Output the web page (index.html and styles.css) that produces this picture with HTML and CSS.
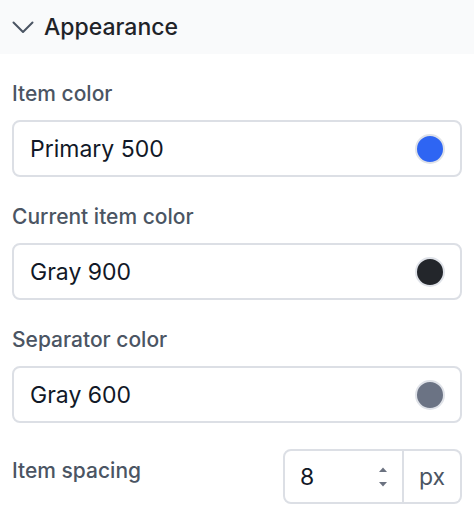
FILE: index.html
```html
<!DOCTYPE html>
<html lang="en">
<head>
  <meta charset="UTF-8">
  <meta name="viewport" content="width=device-width, initial-scale=1.0">
  <title>Appearance</title>
  <link rel="stylesheet" href="styles.css">
</head>
<body>
  <div class="panel">
    <div class="panel-header">
      <svg class="chevron" width="22" height="13" viewBox="0 0 22 13">
        <path d="M1.5 1.5 L11 11 L20.5 1.5" fill="none" stroke="#4b5563" stroke-width="2" stroke-linecap="round" stroke-linejoin="round"/>
      </svg>
      <span class="panel-title">Appearance</span>
    </div>

    <div class="panel-body">
      <div class="field">
        <div class="field-label">Item color</div>
        <div class="color-input">
          <span class="color-value">Primary 500</span>
          <span class="swatch swatch-primary"></span>
        </div>
      </div>

      <div class="field">
        <div class="field-label">Current item color</div>
        <div class="color-input">
          <span class="color-value">Gray 900</span>
          <span class="swatch swatch-gray900"></span>
        </div>
      </div>

      <div class="field">
        <div class="field-label">Separator color</div>
        <div class="color-input">
          <span class="color-value">Gray 600</span>
          <span class="swatch swatch-gray600"></span>
        </div>
      </div>

      <div class="field field-row">
        <div class="field-label">Item spacing</div>
        <div class="unit-input">
          <div class="number-box">
            <span class="number-value">8</span>
            <span class="spinner">
              <svg width="10" height="24" viewBox="0 0 10 24">
                <path d="M1 7 L5 2.5 L9 7 Z" fill="#6b7280"/>
                <path d="M1 17 L5 21.5 L9 17 Z" fill="#6b7280"/>
              </svg>
            </span>
          </div>
          <div class="unit-box">px</div>
        </div>
      </div>
    </div>
  </div>
</body>
</html>
```

FILE: styles.css
```css
body {
  margin: 0;
  background-color: #fff;
  font-family: Inter, "Noto Sans", sans-serif;
}

.panel-header {
  height: 54px;
  background-color: #f9fafb;
  padding: 0 12px 0 12px;
  display: flex;
  align-items: center;
  gap: 10px;
}
.chevron {
  display: block;
  margin-top: 1px;
}
.panel-title {
  font-size: 23px;
  font-weight: 500;
  color: #1f2328;
}

.panel-body {
  padding: 26px 12px 0 12px;
}

.field {
  margin-bottom: 26px;
}
.field-label {
  font-size: 21px;
  line-height: 28px;
  font-weight: 500;
  color: #4b5563;
  margin-bottom: 12px;
}

.color-input {
  box-sizing: border-box;
  height: 57px;
  border: 2px solid #dcdfe5;
  border-radius: 8px;
  display: flex;
  align-items: center;
  justify-content: space-between;
  padding: 0 15px 0 16px;
}
.color-value {
  font-size: 23px;
  color: #111827;
}
.swatch {
  box-sizing: border-box;
  width: 30px;
  height: 30px;
  border-radius: 50%;
  border: 2px solid #dfe2e8;
}
.swatch-primary {
  background-color: #2e65f3;
}
.swatch-gray900 {
  background-color: #23262b;
}
.swatch-gray600 {
  background-color: #6b7384;
}

.field-row {
  display: flex;
  align-items: flex-start;
  justify-content: space-between;
}
.field-row .field-label {
  margin: 8px 0 0 0;
}

.unit-input {
  display: flex;
  height: 55px;
}
.number-box {
  box-sizing: border-box;
  width: 121px;
  border: 2px solid #dcdfe5;
  border-radius: 8px 0 0 8px;
  display: flex;
  align-items: center;
  justify-content: space-between;
  padding: 0 14px 0 15px;
}
.number-value {
  font-size: 23px;
  color: #111827;
}
.spinner svg {
  display: block;
}
.unit-box {
  box-sizing: border-box;
  width: 58px;
  border: 2px solid #dcdfe5;
  border-left: none;
  border-radius: 0 8px 8px 0;
  display: flex;
  align-items: center;
  justify-content: center;
  font-size: 23px;
  color: #4b5563;
}
```
